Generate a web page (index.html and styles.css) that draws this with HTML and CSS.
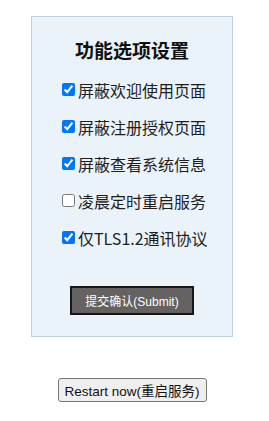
FILE: index.html
```html
<!DOCTYPE html>
<html>
<head>
<meta charset="utf-8">
<link rel="stylesheet" href="styles.css">
</head>
<body>
<div class="page">
  <form class="panel">
    <h2 class="title">功能选项设置</h2>
    <div class="options">
      <label class="opt"><input type="checkbox" checked>屏蔽欢迎使用页面</label>
      <label class="opt"><input type="checkbox" checked>屏蔽注册授权页面</label>
      <label class="opt"><input type="checkbox" checked>屏蔽查看系统信息</label>
      <label class="opt"><input type="checkbox">凌晨定时重启服务</label>
      <label class="opt"><input type="checkbox" checked>仅TLS1.2通讯协议</label>
    </div>
    <div class="actions">
      <button type="button" class="submit">提交确认(Submit)</button>
    </div>
  </form>
  <div class="restart-row">
    <button type="button" class="restart">Restart now(重启服务)</button>
  </div>
</div>
</body>
</html>
```

FILE: styles.css
```css
html, body {
  margin: 0;
  padding: 0;
  background: #ffffff;
}
.page {
  width: 202px;
  margin: 0;
  padding: 16px 0 0 31px;
  font-family: "Liberation Sans", "Noto Sans CJK SC", sans-serif;
}
.panel {
  box-sizing: border-box;
  width: 202px;
  border: 1px solid #bfd0de;
  background: #eaf2fa;
  padding: 19px 0 21px 0;
  margin: 0;
}
.title {
  margin: 0 0 7px 0;
  text-align: center;
  font-family: "Noto Sans CJK SC", sans-serif;
  font-size: 19px;
  line-height: 28px;
  font-weight: 700;
  color: #111;
}
.options {
  display: flex;
  flex-direction: column;
  padding-left: 30px;
}
.opt {
  display: flex;
  align-items: center;
  height: 37px;
  font-family: "Noto Sans CJK SC", sans-serif;
  font-size: 16px;
  color: #1e1e1e;
}
.opt input {
  width: 13px;
  height: 13px;
  margin: 0 3px 0 0;
}
.actions {
  display: flex;
  justify-content: center;
  margin-top: 30px;
}
.submit {
  box-sizing: border-box;
  height: 29px;
  width: 124px;
  padding: 0;
  background: #656261;
  color: #ffffff;
  border: 2px solid #161616;
  border-radius: 0;
  font-family: "Liberation Sans", "Noto Sans CJK SC", sans-serif;
  font-size: 12px;
}
.restart-row {
  display: flex;
  justify-content: center;
  margin-top: 41px;
}
.restart {
  box-sizing: border-box;
  height: 24px;
  width: 149px;
  padding: 0;
  font-family: "Liberation Sans", "Noto Sans CJK SC", sans-serif;
  font-size: 13.5px;
  color: #111;
  background: #efefef;
  border: 1px solid #767676;
  border-radius: 3px;
}
```
